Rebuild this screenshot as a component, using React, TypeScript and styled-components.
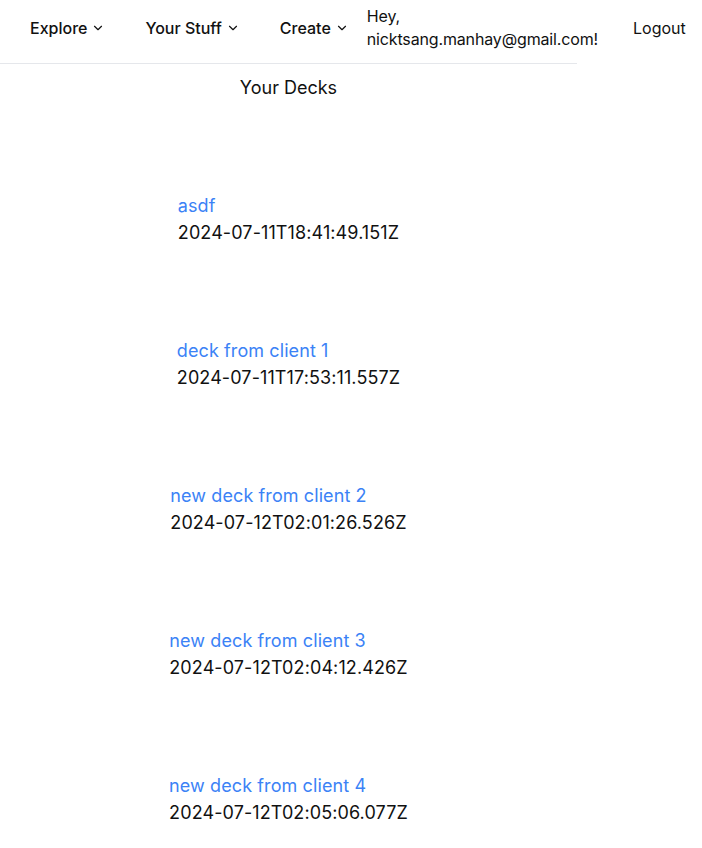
import React from "react";
import styled, { createGlobalStyle } from "styled-components";
import { ChevronDown } from "lucide-react";

const Global = createGlobalStyle`
  html, body { margin: 0; padding: 0; background: #fff; }
  body { font-family: Inter, "Noto Sans", sans-serif; color: #111; }
`;

const Page = styled.div`
  width: 577px;
`;

const Header = styled.header`
  display: flex;
  align-items: center;
  height: 55px;
  padding: 0 0 8px 10px;
  border-bottom: 1px solid #e5e7eb;
  box-sizing: content-box;
`;

const NavButton = styled.button`
  display: flex;
  align-items: center;
  gap: 4px;
  flex-shrink: 0;
  background: none;
  border: none;
  padding: 0 20px;
  font-family: Inter, sans-serif;
  font-size: 16px;
  font-weight: 500;
  color: #111;
  cursor: pointer;
  white-space: nowrap;
  svg { margin-top: 1px; }
`;

const Greeting = styled.div`
  width: min-content;
  flex-shrink: 0;
  margin-left: -2px;
  font-size: 16px;
  line-height: 23px;
  letter-spacing: -0.15px;
  color: #111;
`;

const Logout = styled.button`
  flex-shrink: 0;
  background: none;
  border: none;
  margin-left: 35px;
  padding: 0;
  font-family: Inter, sans-serif;
  font-size: 16px;
  color: #111;
  cursor: pointer;
`;

const Main = styled.main`
  display: flex;
  flex-direction: column;
  align-items: center;
`;

const Heading = styled.h1`
  margin: 10px 0 0;
  font-size: 18px;
  font-weight: 400;
  line-height: 27px;
`;

const DeckList = styled.ul`
  list-style: none;
  margin: 91px 0 0;
  padding: 0;
  display: flex;
  flex-direction: column;
  align-items: center;
  gap: 91px;
`;

const Deck = styled.li`
  display: flex;
  flex-direction: column;
  align-items: flex-start;
  font-size: 18px;
  line-height: 27px;
  letter-spacing: 0.1px;
`;

const DeckTitle = styled.a`
  color: #3b82f6;
  text-decoration: none;
`;

const DeckDate = styled.span`
  color: #111;
`;

const decks = [
  { title: "asdf", date: "2024-07-11T18:41:49.151Z" },
  { title: "deck from client 1", date: "2024-07-11T17:53:11.557Z" },
  { title: "new deck from client 2", date: "2024-07-12T02:01:26.526Z" },
  { title: "new deck from client 3", date: "2024-07-12T02:04:12.426Z" },
  { title: "new deck from client 4", date: "2024-07-12T02:05:06.077Z" },
];

export default function App() {
  return (
    <Page>
      <Global />
      <Header>
        <NavButton>
          Explore <ChevronDown size={14} strokeWidth={2} />
        </NavButton>
        <NavButton>
          Your Stuff <ChevronDown size={14} strokeWidth={2} />
        </NavButton>
        <NavButton>
          Create <ChevronDown size={14} strokeWidth={2} />
        </NavButton>
        <Greeting>Hey, nicktsang.manhay@gmail.com!</Greeting>
        <Logout>Logout</Logout>
      </Header>
      <Main>
        <Heading>Your Decks</Heading>
        <DeckList>
          {decks.map((d) => (
            <Deck key={d.title}>
              <DeckTitle href="#">{d.title}</DeckTitle>
              <DeckDate>{d.date}</DeckDate>
            </Deck>
          ))}
        </DeckList>
      </Main>
    </Page>
  );
}
